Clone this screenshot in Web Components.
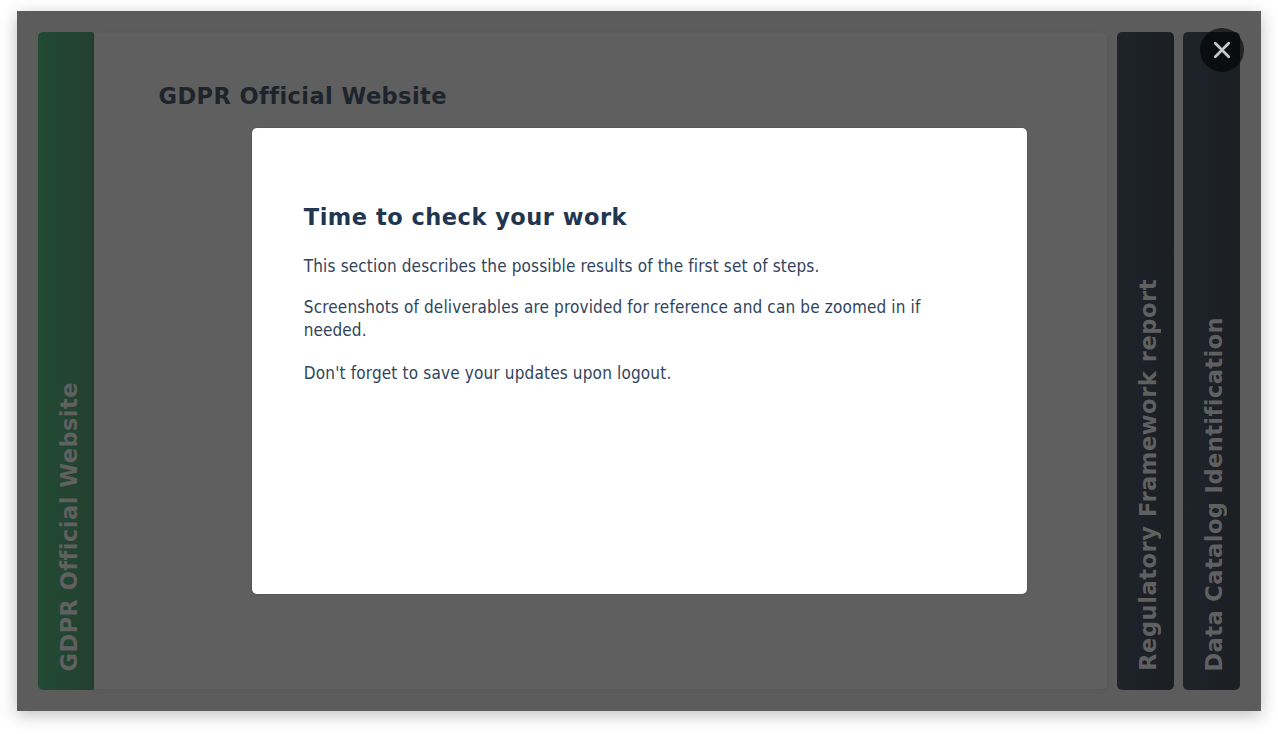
<!DOCTYPE html>
<html lang="en">
<head>
<meta charset="utf-8">
<title>GDPR Official Website</title>
<style>
html,body{margin:0;height:100%;background:#fff;overflow:hidden}
body{font-family:"DejaVu Sans",sans-serif;box-sizing:border-box;padding:11px 17px 23px}
</style>
</head>
<body>
<lesson-stage>
  <accordion-tab class="green">GDPR Official Website</accordion-tab>
  <accordion-panel>GDPR Official Website</accordion-panel>
  <accordion-tab class="report">Regulatory Framework report</accordion-tab>
  <accordion-tab class="catalog">Data Catalog Identification</accordion-tab>
  <info-dialog slot="over"></info-dialog>
  <close-button slot="over"></close-button>
</lesson-stage>
<script>
const define = (name, html, setup) => customElements.define(name, class extends HTMLElement {
  constructor() {
    super();
    this.attachShadow({mode: 'open'}).innerHTML = html;
  }
  connectedCallback() { if (setup) setup(this); }
});

// One line of text, tracked so that it fills the given length.
define('tracked-line', `<style>:host{display:block;white-space:nowrap}span{display:inline-block}</style><span><slot></slot></span>`, el => {
  const want = +el.getAttribute('length');
  const span = el.shadowRoot.querySelector('span');
  const n = el.textContent.length;
  span.style.letterSpacing = '0.001px';
  const have = Math.max(span.offsetWidth, span.offsetHeight);
  span.style.letterSpacing = ((want - have) / (n - 1)).toFixed(3) + 'px';
});

define('lesson-stage', `<style>
:host{display:flex;height:700px;box-sizing:border-box;padding:21px 21px 21px;position:relative;background:#5c5c5c;box-shadow:0 4px 16px rgba(0,0,0,.25)}
</style><slot></slot><slot name="over"></slot>`);

const lengths = {green: 289.5, report: 391, catalog: 354.5};
customElements.define('accordion-tab', class extends HTMLElement {
  connectedCallback() {
    this.attachShadow({mode: 'open'}).innerHTML = `<style>
:host{display:flex;flex:none;align-items:flex-end;width:57px;height:658px;box-sizing:border-box;padding:0 0 19px 16px;border-radius:5px;color:#606060;background:linear-gradient(90deg,#1f232c,#1b1f22)}
:host(.green){width:56px;background:linear-gradient(90deg,#224a35,#22402f);border-radius:5px 2px 2px 5px;}
:host(.report){margin:0 9px 0 10px}
tracked-line{writing-mode:vertical-rl;transform:rotate(180deg);font-weight:700;font-size:22.5px;line-height:30px}
</style><tracked-line length="${lengths[this.className]}">${this.textContent}</tracked-line>`;
  }
});

customElements.define('accordion-panel', class extends HTMLElement {
  connectedCallback() {
    this.attachShadow({mode: 'open'}).innerHTML = `<style>
:host{display:block;flex:1;height:656px;margin-top:1px;box-sizing:border-box;padding:46px 0 0 64.500px;background:#5f5f5f;border-radius:0 4px 4px 0;box-shadow:0 1px 4px rgba(0,0,0,.08)}
h2{margin:0;font-size:22.5px;line-height:34px;color:#1d242c}
</style><h2><tracked-line length="288.5">${this.textContent}</tracked-line></h2>`;
  }
});

define('info-dialog', `<style>
:host{display:block;position:absolute;left:234.5px;top:117px;width:775px;height:466px;box-sizing:border-box;padding:72px 51px 0 52.300px;background:#fff;border-radius:5px;box-shadow:0 0 2px rgba(0,0,0,.25);color:#30445c}
h2{margin:0 0 21px;font-size:22.5px;line-height:34px;color:#22364f}
p{margin:0 0 18px;font-family:"DejaVu Sans Condensed","DejaVu Sans",sans-serif;font-stretch:condensed;font-size:17px;line-height:23px}
p.last{margin-top:20px}
</style>
<h2><tracked-line length="323">Time to check your work</tracked-line></h2>
<p><tracked-line length="516">This section describes the possible results of the first set of steps.</tracked-line></p>
<p><tracked-line length="616.5">Screenshots of deliverables are provided for reference and can be zoomed in if</tracked-line><tracked-line length="62.5">needed.</tracked-line></p>
<p class="last"><tracked-line length="367.5">Don't forget to save your updates upon logout.</tracked-line></p>`);

define('close-button', `<style>
:host{display:block;position:absolute;left:1183px;top:17px;width:44px;height:44px;border-radius:50%;background:rgba(0,0,0,.62)}
svg{display:block}
</style><svg width="44" height="44" viewBox="0 0 44 44"><path d="M15.300 15.300l13.400 13.400M28.700 15.300l-13.400 13.400" fill="none" stroke="#c9c9c9" stroke-width="2.7" stroke-linecap="round"/></svg>`);
</script>
</body>
</html>
